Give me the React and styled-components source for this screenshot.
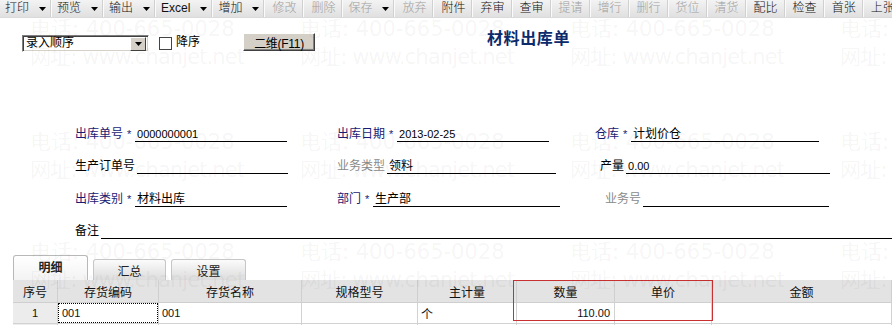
import React from 'react';
import styled, { createGlobalStyle } from 'styled-components';

const Global = createGlobalStyle`
  html, body { margin: 0; padding: 0; background: #fff; }
  body {
    font-family: "Liberation Sans", "Noto Sans CJK SC", sans-serif;
    font-size: 12px;
    color: #000;
  }
  #root { width: 892px; height: 325px; overflow: hidden; }
`;

const Page = styled.div`
  position: relative;
  width: 892px;
  height: 325px;
  overflow: hidden;
  background: #fff;
`;

/* ---------- toolbar ---------- */
const Toolbar = styled.div`
  display: flex;
  height: 17px;
  background: linear-gradient(#f3f3f3, #e0e0e0);
  border-bottom: 1px solid #dadada;
  white-space: nowrap;
`;

const ToolButton = styled.div`
  display: flex;
  flex: none;
  align-items: center;
  gap: ${(p) => (p.$menu ? '10px' : '0')};
  padding: 0 ${(p) => (p.$menu ? '5px' : '7px')};
  border-right: 1px solid #fbfbfb;
  box-shadow: inset -1px 0 #d0d0d0;
  color: ${(p) => (p.$disabled ? '#a0a0a0' : '#111')};
  line-height: 17px;
  font-size: 12px;
  font-weight: 300;
`;

const Arrow = () => (
  <svg width="7" height="4" viewBox="0 0 7 4">
    <polygon points="0,0 7,0 3.5,4" fill="#000" />
  </svg>
);

/* ---------- top controls ---------- */
const TopRow = styled.div`
  display: flex;
  align-items: flex-start;
  height: 83px;
  padding: 8px 0 0 22px;
`;

const SelectBox = styled.div`
  margin-top: 9px;
  width: 127px;
  height: 17px;
  box-sizing: border-box;
  display: flex;
  align-items: center;
  justify-content: space-between;
  border: 1px solid;
  border-color: #808080 #fff #fff #808080;
  box-shadow: inset 1px 1px #404040, inset -1px -1px #d4d0c8;
  padding: 0 2px 0 3px;
  background: #fff;
`;

const SelectText = styled.span`
  line-height: 15px;
`;

const SelectButton = styled.div`
  width: 14px;
  height: 12px;
  display: flex;
  align-items: center;
  justify-content: center;
  background: #d4d0c8;
  border: 1px solid;
  border-color: #fff #404040 #404040 #fff;
`;

const CheckBox = styled.div`
  margin: 11px 0 0 10px;
  width: 11px;
  height: 11px;
  border: 1px solid #444;
  background: #fff;
`;

const CheckLabel = styled.span`
  margin: 9px 0 0 4px;
  line-height: 15px;
`;

const ClassicButton = styled.div`
  margin: 7px 0 0 43px;
  width: 72px;
  height: 18px;
  box-sizing: border-box;
  display: flex;
  align-items: center;
  justify-content: center;
  background: #d4d0c8;
  border: 1px solid;
  border-color: #fff #404040 #404040 #fff;
  box-shadow: inset -1px -1px #808080;
  font-size: 12px;
  letter-spacing: -0.3px;
`;

const Title = styled.h1`
  margin: 0 0 0 172px;
  font-size: 16px;
  line-height: 22px;
  font-weight: bold;
  letter-spacing: 0.6px;
  color: #0d2b6b;
  font-family: "Noto Sans CJK SC", sans-serif;
`;

/* ---------- form ---------- */
const Form = styled.div`
  display: flex;
  flex-direction: column;
`;

const FormRow = styled.div`
  display: grid;
  grid-template-columns: ${(p) => (p.$wide ? '1fr' : '262px 258px 1fr')};
  align-items: end;
  height: ${(p) => p.$h}px;
  padding-left: 75px;
`;

const Field = styled.div`
  display: flex;
  align-items: flex-end;
  padding-left: ${(p) => p.$indent || 0}px;
`;

const Label = styled.span`
  flex: none;
  line-height: 14px;
  margin-bottom: 1px;
  white-space: nowrap;
  color: ${(p) => (p.$tone === 'key' ? '#1a1a72' : p.$tone === 'off' ? '#8a8a8a' : '#000')};
`;

const Star = styled.span`
  flex: none;
  width: 12px;
  text-align: center;
  line-height: 14px;
  margin-bottom: 1px;
  color: #1a1a72;
  font-size: 11px;
`;

const Gap = styled.span`
  flex: none;
  width: 2px;
`;

const Line = styled.div`
  flex: none;
  width: ${(p) => p.$w}px;
  height: 14px;
  border-bottom: 1px solid #000;
  padding-left: 2px;
  line-height: 14px;
  font-size: ${(p) => (p.$num ? '11px' : '12px')};
  white-space: nowrap;
`;

/* ---------- tabs ---------- */
const TabBar = styled.div`
  display: flex;
  align-items: flex-end;
  gap: 5px;
  height: 25px;
  margin-top: 16px;
  padding-left: 13px;
`;

const Tab = styled.div`
  width: ${(p) => p.$w}px;
  height: ${(p) => (p.$active ? 25 : 21)}px;
  box-sizing: border-box;
  display: flex;
  align-items: center;
  justify-content: center;
  border: 1px solid ${(p) => (p.$active ? '#b8b8b8' : '#c6c6c6')};
  border-bottom: none;
  border-radius: 3px 3px 0 0;
  background: ${(p) =>
    p.$active ? 'linear-gradient(#ffffff, #f3f3f3)' : 'linear-gradient(#fbfbfb, #dcdcdc)'};
  font-weight: ${(p) => (p.$active ? 'bold' : 'normal')};
  padding-bottom: ${(p) => (p.$active ? '3px' : '0')};
  color: #222;
`;

/* ---------- grid ---------- */
const TableWrap = styled.div`
  position: relative;
  margin-left: 13px;
`;

const cols = '45px 101px 143px 116px 99px 98px 97px 180px';

const GridRow = styled.div`
  display: grid;
  grid-template-columns: ${cols};
  height: ${(p) => p.$h}px;
  background: ${(p) => (p.$head ? '#e3e3e3' : '#fff')};
`;

const Cell = styled.div`
  box-sizing: border-box;
  display: flex;
  align-items: center;
  justify-content: ${(p) => p.$align || 'flex-start'};
  padding: 0 ${(p) => (p.$align === 'flex-end' ? '4px' : '3px')};
  border-right: 1px solid ${(p) => (p.$head ? '#cfcfcf' : '#d2d2d2')};
  border-bottom: 1px solid ${(p) => (p.$head ? '#cfcfcf' : '#d2d2d2')};
  background: ${(p) => (p.$shade ? '#ececec' : 'transparent')};
  font-size: ${(p) => (p.$num ? '11px' : '12px')};
  white-space: nowrap;
  color: #111;
`;

const FocusRect = styled.div`
  align-self: stretch;
  flex: 1;
  margin: 0 -3px;
  border: 1px dotted #000;
  display: flex;
  align-items: center;
  padding-left: 3px;
  font-size: 11px;
`;

const Highlight = styled.div`
  position: absolute;
  left: 500px;
  top: 0;
  width: 200px;
  height: 41px;
  box-sizing: border-box;
  border: 1px solid #c83130;
  pointer-events: none;
`;

/* ---------- watermark ---------- */
const Watermark = styled.div`
  position: absolute;
  inset: 0;
  pointer-events: none;
  z-index: 5;
`;

const WMLine = styled.div`
  position: absolute;
  left: 30px;
  top: ${(p) => p.$top}px;
  display: flex;
  white-space: nowrap;
`;

const WMText = styled.span`
  width: 270px;
  flex: none;
  font-size: 21px;
  line-height: 24px;
  color: rgba(0, 0, 0, 0.055);
  font-family: "DejaVu Sans", "Noto Sans CJK SC", sans-serif;
  letter-spacing: ${(p) => (p.$web ? '-0.9px' : '0')};
`;

const tools = [
  { t: '打印', m: 1 },
  { t: '预览', m: 1 },
  { t: '输出', m: 1 },
  { t: 'Excel', m: 1 },
  { t: '增加', m: 1 },
  { t: '修改', d: 1 },
  { t: '删除', d: 1 },
  { t: '保存', m: 1, d: 1 },
  { t: '放弃', d: 1 },
  { t: '附件' },
  { t: '弃审' },
  { t: '查审' },
  { t: '提请', d: 1 },
  { t: '增行', d: 1 },
  { t: '删行', d: 1 },
  { t: '货位', d: 1 },
  { t: '清货', d: 1 },
  { t: '配比' },
  { t: '检查' },
  { t: '首张' },
  { t: '上张' },
];

const heads = ['序号', '存货编码', '存货名称', '规格型号', '主计量', '数量', '单价', '金额'];

const wmRows = [
  { top: 17, web: false },
  { top: 45, web: true },
  { top: 130, web: false },
  { top: 158, web: true },
  { top: 240, web: false },
  { top: 268, web: true },
];

export default function App() {
  return (
    <Page>
      <Global />
      <Toolbar>
        {tools.map((b) => (
          <ToolButton key={b.t} $menu={!!b.m} $disabled={!!b.d}>
            <span>{b.t}</span>
            {b.m ? <Arrow /> : null}
          </ToolButton>
        ))}
      </Toolbar>

      <TopRow>
        <SelectBox>
          <SelectText>录入顺序</SelectText>
          <SelectButton>
            <Arrow />
          </SelectButton>
        </SelectBox>
        <CheckBox />
        <CheckLabel>降序</CheckLabel>
        <ClassicButton>二维(F11)</ClassicButton>
        <Title>材料出库单</Title>
      </TopRow>

      <Form>
        <FormRow $h={33}>
          <Field>
            <Label $tone="key">出库单号</Label>
            <Star>*</Star>
            <Line $w={150} $num>0000000001</Line>
          </Field>
          <Field>
            <Label $tone="key">出库日期</Label>
            <Star>*</Star>
            <Line $w={150} $num>2013-02-25</Line>
          </Field>
          <Field>
            <Label $tone="key">仓库</Label>
            <Star>*</Star>
            <Line $w={186}>计划价仓</Line>
          </Field>
        </FormRow>
        <FormRow $h={32}>
          <Field>
            <Label>生产订单号</Label>
            <Gap />
            <Line $w={149} />
          </Field>
          <Field>
            <Label $tone="off">业务类型</Label>
            <Gap />
            <Line $w={167}>领料</Line>
          </Field>
          <Field $indent={5}>
            <Label>产量</Label>
            <Gap />
            <Line $w={202} $num>0.00</Line>
          </Field>
        </FormRow>
        <FormRow $h={33}>
          <Field>
            <Label $tone="key">出库类别</Label>
            <Star>*</Star>
            <Line $w={150}>材料出库</Line>
          </Field>
          <Field>
            <Label $tone="key">部门</Label>
            <Star>*</Star>
            <Line $w={185}>生产部</Line>
          </Field>
          <Field $indent={10}>
            <Label $tone="off">业务号</Label>
            <Gap />
            <Line $w={184} />
          </Field>
        </FormRow>
        <FormRow $h={32} $wide>
          <Field>
            <Label>备注</Label>
            <Gap />
            <Line $w={800} />
          </Field>
        </FormRow>
      </Form>

      <TabBar>
        <Tab $active $w={75}>明细</Tab>
        <Tab $w={73}>汇总</Tab>
        <Tab $w={75}>设置</Tab>
      </TabBar>

      <TableWrap>
        <GridRow $head $h={23}>
          {heads.map((h) => (
            <Cell key={h} $head $align="center">{h}</Cell>
          ))}
        </GridRow>
        <GridRow $h={21}>
          <Cell $shade $align="center" $num>1</Cell>
          <Cell>
            <FocusRect>001</FocusRect>
          </Cell>
          <Cell $num>001</Cell>
          <Cell />
          <Cell>个</Cell>
          <Cell $align="flex-end" $num>110.00</Cell>
          <Cell />
          <Cell />
        </GridRow>
        <GridRow $h={21}>
          <Cell $shade />
          <Cell />
          <Cell />
          <Cell />
          <Cell />
          <Cell />
          <Cell />
          <Cell />
        </GridRow>
        <Highlight />
      </TableWrap>

      <Watermark>
        {wmRows.map((r) => (
          <WMLine key={r.top} $top={r.top}>
            {[0, 1, 2, 3].map((i) => (
              <WMText key={i} $web={r.web}>
                {r.web ? '网址: www.chanjet.net' : '电话: 400-665-0028'}
              </WMText>
            ))}
          </WMLine>
        ))}
      </Watermark>
    </Page>
  );
}
